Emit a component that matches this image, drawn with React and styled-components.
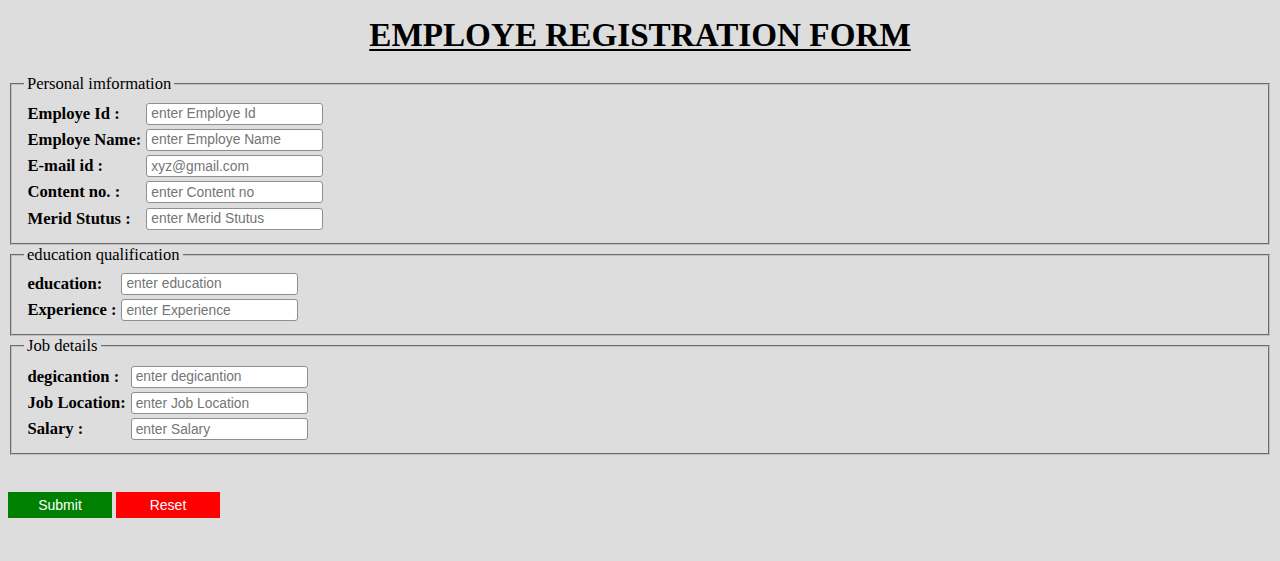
import React from 'react';
import styled, { createGlobalStyle } from 'styled-components';

const GlobalStyle = createGlobalStyle`
  body {
    margin: 8px;
    background-color: #dddddd;
    font-family: "Liberation Serif", "Times New Roman", serif;
    color: #000;
  }
`;

const Title = styled.h1`
  margin: 8px 0 20px;
  text-align: center;
  font-size: 33.2px;
  font-weight: bold;
  text-decoration: underline;
  text-decoration-thickness: 2px;
  text-underline-offset: 3px;
`;

const Section = styled.fieldset`
  margin: 0 2px;
  padding: 0 12px 10px;
  border: 2px groove #c0c0c0;
  &:last-of-type {
    margin-bottom: 37px;
  }
`;

const Legend = styled.legend`
  padding: 0 3px;
  font-size: 16.6px;
`;

const Fields = styled.div`
  display: grid;
  grid-template-columns: auto auto;
  justify-content: start;
  align-items: center;
  column-gap: 5px;
  row-gap: 4.3px;
  padding: ${(p) => p.$top}px 3.5px 3px;
`;

const Label = styled.label`
  font-size: 16.6px;
  font-weight: bold;
  white-space: pre;
`;

const Input = styled.input`
  box-sizing: border-box;
  width: 177px;
  height: 22px;
  padding: 1px 4px;
  border: 1px solid #8f8f8f;
  border-radius: 3px;
  background: #fff;
  font-family: Arial, "Liberation Sans", sans-serif;
  font-size: 13.8px;
  &::placeholder {
    color: #757575;
  }
`;

const Actions = styled.div`
  display: flex;
  gap: 4px;
`;

const Button = styled.button`
  width: 104px;
  height: 26px;
  border: none;
  background-color: ${(p) => p.$bg};
  color: #fff;
  font-family: Arial, "Liberation Sans", sans-serif;
  font-size: 14px;
  cursor: pointer;
`;

const sections = [
  {
    legend: 'Personal imformation',
    top: 8.6,
    fields: [
      ['Employe Id :', 'enter Employe Id'],
      ['Employe Name:', 'enter Employe Name'],
      ['E-mail id :', 'xyz@gmail.com'],
      ['Content no. :', 'enter Content no'],
      ['Merid Stutus :', 'enter Merid Stutus'],
    ],
  },
  {
    legend: 'education qualification',
    top: 8,
    fields: [
      ['education:', 'enter education'],
      ['Experience :', 'enter Experience'],
    ],
  },
  {
    legend: 'Job details',
    top: 9.8,
    fields: [
      ['degicantion :', 'enter degicantion'],
      ['Job Location:', 'enter Job Location'],
      ['Salary :', 'enter Salary'],
    ],
  },
];

export default function App() {
  return (
    <>
      <GlobalStyle />
      <Title>EMPLOYE REGISTRATION FORM</Title>
      <form onSubmit={(e) => e.preventDefault()}>
        {sections.map((s) => (
          <Section key={s.legend}>
            <Legend>{s.legend}</Legend>
            <Fields $top={s.top}>
              {s.fields.map(([label, ph]) => (
                <React.Fragment key={label}>
                  <Label>{label}</Label>
                  <Input type="text" placeholder={ph} />
                </React.Fragment>
              ))}
            </Fields>
          </Section>
        ))}
        <Actions>
          <Button type="submit" $bg="#008000">Submit</Button>
          <Button type="reset" $bg="#ff0000">Reset</Button>
        </Actions>
      </form>
    </>
  );
}
